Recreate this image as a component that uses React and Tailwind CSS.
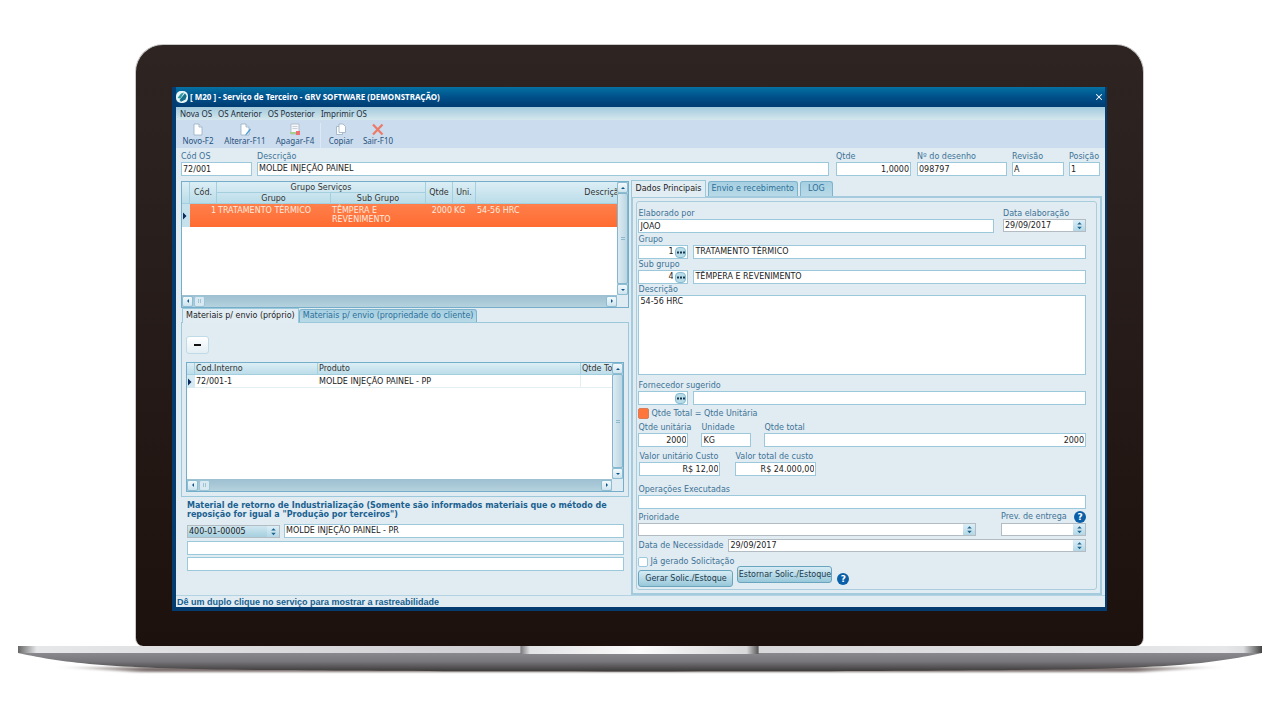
import { X } from 'lucide-react';
import clsx from 'clsx';

const inputClass =
  'block w-full min-w-0 h-[14px] px-px border border-[#9cc8dc] bg-white text-[8px] leading-[12px] text-[#222] outline-none';

const Label = ({ htmlFor, children }) => (
  <label htmlFor={htmlFor} className="block h-[11px] leading-[11px] text-[#3d7396] whitespace-nowrap">
    {children}
  </label>
);

// One-line description box
const LineBox = ({ id, ariaLabel, value }) => (
  <textarea
    id={id}
    aria-label={ariaLabel}
    rows={1}
    defaultValue={value}
    className={clsx(inputClass, 'resize-none overflow-hidden whitespace-nowrap')}
  />
);

const Field = ({ id, label, value = '', right, line, className }) => (
  <div className={className}>
    <Label htmlFor={id}>{label}</Label>
    {line ? (
      <LineBox id={id} value={value} />
    ) : (
      <input id={id} defaultValue={value} className={clsx(inputClass, right && 'text-right')} />
    )}
  </div>
);

const Arrow = ({ dir }) => {
  const points = {
    up: '1,4 3,2 5,4',
    down: '1,2 3,4 5,2',
    left: '4,1 2,3 4,5',
    right: '2,1 4,3 2,5',
  };
  return (
    <svg viewBox="0 0 6 6" className="w-[6px] h-[6px]">
      <polygon points={points[dir]} fill="#0f5687" />
    </svg>
  );
};

const RowMarker = () => (
  <svg viewBox="0 0 8 8" className="size-[8px]">
    <path d="M1 0.5 4.5 4 1 7.5z" fill="#06285c" />
  </svg>
);

const SpinMark = () => (
  <svg viewBox="0 0 11 11" className="w-[11px] h-[11px]">
    <path d="M3.2 4.6 5.5 2.2 7.8 4.6zM3.2 6.8 5.5 9.2 7.8 6.8z" fill="#1b6490" />
  </svg>
);

// Date box with the small up/down button
const SpinInput = ({ id, value = '' }) => (
  <div className="flex h-[13px] border border-[#b3bcc2] bg-white">
    <input id={id} defaultValue={value} className="flex-1 w-full min-w-0 px-px text-[8px] leading-[11px] text-[#222] outline-none" />
    <button aria-label="Alterar valor" className="w-[12px] shrink-0 flex items-center justify-center bg-linear-to-b from-[#dceef6] to-[#b4d7e6]">
      <SpinMark />
    </button>
  </div>
);

const SpinSelect = ({ id, value = '', filled }) => (
  <div
    className={clsx(
      'relative h-[13px] border border-[#b3bcc2]',
      filled ? 'bg-linear-to-b from-[#cfe7f0] to-[#a5cfdf]' : 'bg-white',
    )}
  >
    <select id={id} aria-label={id} className="block w-full h-[11px] px-px appearance-none bg-transparent text-[8px] leading-[11px] text-[#222] outline-none">
      <option>{value}</option>
    </select>
    <span className="absolute right-0 top-0 w-[12px] h-[11px] flex justify-center pointer-events-none bg-linear-to-b from-[#dceef6] to-[#b4d7e6]">
      <SpinMark />
    </span>
  </div>
);

const LookupField = ({ id, label, code = '', name = '' }) => (
  <div>
    <Label htmlFor={id}>{label}</Label>
    <div className="flex gap-[5px]">
      <div className="w-[50px] shrink-0 h-[14px] flex items-center border border-[#9cc8dc] bg-white">
        <input id={id} defaultValue={code} className="flex-1 w-full min-w-0 h-[12px] text-[8px] leading-[12px] text-right text-[#222] pr-[2px] outline-none" />
        <button aria-label="Pesquisar" className="w-[11px] h-[11px] mr-px shrink-0 rounded-[4px] border border-[#86b9d0] bg-[#b9dce9] flex items-center justify-center">
          <svg viewBox="0 0 8 3" className="w-[8px] h-[3px]">
            <path d="M0 .5h2v2H0zM3 .5h2v2H3zM6 .5h2v2H6z" fill="#16374d" />
          </svg>
        </button>
      </div>
      <LineBox ariaLabel={label} value={name} />
    </div>
  </div>
);

const Help = () => (
  <button
    aria-label="Ajuda"
    className="size-[12px] shrink-0 rounded-full bg-[#0a60a8] text-white font-bold text-[9px] leading-[12px] text-center"
  >
    ?
  </button>
);

const ScrollButton = ({ dir }) => (
  <button
    aria-label={dir}
    className="size-[11px] shrink-0 flex items-center justify-center rounded-[2px] border border-[#8dbdd2] bg-linear-to-b from-[#f2f9fc] to-[#cfe4ee]"
  >
    <Arrow dir={dir} />
  </button>
);

// Grid frame: content plus vertical and horizontal scrollbars
const GridFrame = ({ className, children }) => (
  <div className={clsx('flex flex-col border border-[#74aecb] bg-white', className)}>
    <div className="flex flex-1 min-h-0">
      <div className="flex-1 min-w-0 overflow-hidden">{children}</div>
      <div className="w-[11px] flex flex-col bg-[#b2cfdd]">
        <ScrollButton dir="up" />
        <div className="flex-1 flex flex-col items-center justify-center gap-px rounded-[2px] border border-[#84b7ce] bg-linear-to-r from-[#dcebf2] to-[#bcd6e2]">
          <span className="w-[4px] h-px bg-[#8cb8cc]" />
          <span className="w-[4px] h-px bg-[#8cb8cc]" />
        </div>
        <ScrollButton dir="down" />
      </div>
    </div>
    <div className="flex h-[12px] items-center bg-[#dfebf2]">
      <div className="flex flex-1 h-full items-center bg-linear-to-b from-[#9dbfd0] to-[#b5d1de]">
        <ScrollButton dir="left" />
        <div className="size-[11px] ml-px flex items-center justify-center gap-px rounded-[2px] border border-[#9cc6d8] bg-[#d9e9f1]">
          <span className="w-px h-[4px] bg-[#a2c3d3]" />
          <span className="w-px h-[4px] bg-[#a2c3d3]" />
        </div>
        <span className="flex-1" />
        <ScrollButton dir="right" />
      </div>
      <span className="w-[11px]" />
    </div>
  </div>
);

const Tab = ({ active, tall, children }) => (
  <button
    role="tab"
    aria-selected={!!active}
    className={clsx(
      'px-[3px] border border-b-0 whitespace-nowrap',
      active
        ? '-mb-px border-[#9cc8dc] bg-[#e2ecf3] text-[#222]'
        : 'rounded-t-[3px] border-[#7db4cd] bg-linear-to-b from-[#a6cfe1] to-[#b9dae7] text-[#2c7099]',
      active && (tall ? 'h-[17px]' : 'h-[15px]'),
      !active && (tall ? 'h-[15px]' : 'h-[13px]'),
    )}
  >
    {children}
  </button>
);

const Sheet = ({ children }) => (
  <>
    <path d="M3 1h5l3 3v8H3z" fill="#fff" stroke="#98adc3" strokeWidth="0.8" />
    <path d="M8 1v3h3" fill="#dfe9f4" stroke="#98adc3" strokeWidth="0.8" />
    {children}
  </>
);

const tools = [
  { label: 'Novo-F2', width: 'w-[44px]', icon: <Sheet /> },
  {
    label: 'Alterar-F11',
    width: 'w-[50px]',
    icon: (
      <Sheet>
        <path d="M12 5.5 8 10.5l-1 2 2-1 4-5z" fill="#4f9fd8" />
      </Sheet>
    ),
  },
  {
    label: 'Apagar-F4',
    width: 'w-[50px]',
    icon: (
      <>
        <path d="M3 1h8v10H3z" fill="#f7f8fa" stroke="#a9b4c4" strokeWidth="0.8" />
        <path d="M4.5 3.5h5M4.5 5.5h5" stroke="#b9c4d2" strokeWidth="0.8" />
        <path d="M2 9h6v2H2z" fill="#a6cf8d" />
        <path d="M8 8h4v4H8z" fill="#ee6f74" />
      </>
    ),
  },
  {
    label: 'Copiar',
    width: 'w-[41px]',
    icon: (
      <>
        <path d="M2.5 3.5h6v8h-6z" fill="#fff" stroke="#98adc3" strokeWidth="0.8" />
        <path d="M5 1h4l2.5 2.5V9.5H5z" fill="#fff" stroke="#98adc3" strokeWidth="0.8" />
      </>
    ),
  },
  {
    label: 'Sair-F10',
    width: 'w-[34px]',
    icon: <path d="M2 1.5 11.5 11.5M11.5 1.5 2 11.5" stroke="#ec7a68" strokeWidth="2.2" />,
  },
];

const Toolbar = () => (
  <div className="flex h-[28px] pt-[3px] bg-[#cbdcee] font-['Noto_Sans',sans-serif] text-[#27527c]">
    {tools.map(({ label, width, icon }) => (
      <button
        key={label}
        className={clsx(
          width,
          'flex flex-col items-center whitespace-nowrap',
          label === 'Copiar' && 'border-l border-[#dde8f4]',
        )}
      >
        <svg viewBox="0 0 14 13" fill="none" className="w-[14px] h-[13px]">
          {icon}
        </svg>
        <span className="leading-[10px]">{label}</span>
      </button>
    ))}
  </div>
);

const thClass = 'p-0 font-normal border-r border-b border-[#a3cfdf]';

const ServicesGrid = () => (
  <GridFrame className="h-[127px]">
    <table className="table-fixed w-[551px] border-separate border-spacing-0 leading-[9px]">
      <colgroup>
        <col className="w-[8px]" />
        <col className="w-[27px]" />
        <col className="w-[114px]" />
        <col className="w-[95px]" />
        <col className="w-[27px]" />
        <col className="w-[23px]" />
        <col className="w-[257px]" />
      </colgroup>
      <thead className="bg-linear-to-b from-[#dceef5] to-[#b9dce8] text-[#333]">
        <tr className="h-[11px]">
          <th rowSpan={2} className={thClass} />
          <th rowSpan={2} className={thClass}>Cód.</th>
          <th colSpan={2} className={thClass}>Grupo Serviços</th>
          <th rowSpan={2} className={thClass}>Qtde</th>
          <th rowSpan={2} className={thClass}>Uni.</th>
          <th rowSpan={2} className={thClass}>Descrição</th>
        </tr>
        <tr className="h-[11px]">
          <th className={thClass}>Grupo</th>
          <th className={thClass}>Sub Grupo</th>
        </tr>
      </thead>
      <tbody>
        <tr className="h-[23px] align-top bg-linear-to-b from-[#ff7f4b] to-[#ff6b30] text-[#ffeadf]">
          <td className="p-0 align-middle bg-[#c4e1ec]">
            <RowMarker />
          </td>
          <td className="px-px pt-[2px] pb-0 text-right">1</td>
          <td className="px-px pt-[2px] pb-0">TRATAMENTO TÉRMICO</td>
          <td className="px-px pt-[2px] pb-0">TÊMPERA E REVENIMENTO</td>
          <td className="px-px pt-[2px] pb-0 text-right">2000</td>
          <td className="px-px pt-[2px] pb-0">KG</td>
          <td className="px-px pt-[2px] pb-0">54-56 HRC</td>
        </tr>
      </tbody>
    </table>
  </GridFrame>
);

const MaterialsGrid = () => (
  <GridFrame className="h-[130px]">
    <table className="table-fixed w-[460px] border-separate border-spacing-0 leading-[11px]">
      <colgroup>
        <col className="w-[8px]" />
        <col className="w-[123px]" />
        <col className="w-[263px]" />
        <col className="w-[66px]" />
      </colgroup>
      <thead className="bg-linear-to-b from-[#dceef5] to-[#b9dce8] text-[#333] text-left">
        <tr className="h-[12px]">
          <th className={thClass} />
          <th className={clsx(thClass, 'pl-px')}>Cod.Interno</th>
          <th className={clsx(thClass, 'pl-px')}>Produto</th>
          <th className={clsx(thClass, 'pl-px')}>Qtde Total</th>
        </tr>
      </thead>
      <tbody>
        <tr className="h-[13px] text-[#222]">
          <td className="p-0 bg-[#d4e9f1]">
            <RowMarker />
          </td>
          <td className="py-0 px-px border-b border-[#e4eff4]">72/001-1</td>
          <td className="py-0 px-px border-b border-r border-[#e4eff4]">MOLDE INJEÇÃO PAINEL - PP</td>
          <td className="py-0 px-px border-b border-[#e4eff4]" />
        </tr>
      </tbody>
    </table>
  </GridFrame>
);

const LeftColumn = () => (
  <div className="min-w-0 pt-px">
    <ServicesGrid />
    <div role="tablist" className="flex items-end pl-px">
      <Tab active>Materiais p/ envio (próprio)</Tab>
      <Tab>Materiais p/ envio (propriedade do cliente)</Tab>
    </div>
    <div className="border border-[#9cc8dc] px-[4px] pt-[13px] pb-[4px]">
      <button
        aria-label="Remover"
        className="w-[23px] h-[18px] mb-[8px] flex items-center justify-center rounded-[3px] border border-[#c0dbe7] bg-linear-to-b from-white to-[#e3eef3]"
      >
        <span className="w-[7px] h-[2px] bg-[#111]" />
      </button>
      <MaterialsGrid />
    </div>
    <div className="pl-[6px] pr-[5px] pt-[4px]">
      <p className="font-bold leading-[9px] text-[#1a6190]">
        Material de retorno de Industrialização (Somente são informados materiais que o método de reposição for igual a
        "Produção por terceiros")
      </p>
      <div className="flex gap-[4px] pt-[5px]">
        <div className="w-[93px] shrink-0 pt-px">
          <SpinSelect id="Material" value="400-01-00005" filled />
        </div>
        <LineBox ariaLabel="Material de retorno" value="MOLDE INJEÇÃO PAINEL - PR" />
      </div>
      <div className="flex flex-col gap-[2px] pt-[3px]">
        <input aria-label="Material 2" className={inputClass} />
        <input aria-label="Material 3" className={inputClass} />
      </div>
    </div>
  </div>
);

const actionClass =
  'w-[95px] h-[17px] rounded-[3px] border border-[#6aa5bf] bg-linear-to-b from-[#d7ecf4] to-[#98c8da] text-[#1c3a4d] whitespace-nowrap';

const MainDataForm = () => (
  <div className="border border-[#a9cddd] rounded-[3px] pl-px pr-[10px] pt-[6px] pb-[2px]">
    <div className="flex gap-[9px]">
      <Field id="elaborado" label="Elaborado por" value="JOAO" className="flex-1" />
      <div className="w-[83px]">
        <Label htmlFor="dataElab">Data elaboração</Label>
        <SpinInput id="dataElab" value="29/09/2017" />
      </div>
    </div>
    <div className="pt-px">
      <LookupField id="grupo" label="Grupo" code="1" name="TRATAMENTO TÉRMICO" />
      <LookupField id="subgrupo" label="Sub grupo" code="4" name="TÊMPERA E REVENIMENTO" />
    </div>
    <Label htmlFor="descServico">Descrição</Label>
    <textarea
      id="descServico"
      defaultValue="54-56 HRC"
      className="block w-full h-[80px] px-px border border-[#9cc8dc] bg-white text-[#222] leading-[11px] resize-none outline-none"
    />
    <div className="pt-[5px]">
      <LookupField id="fornecedor" label="Fornecedor sugerido" />
    </div>
    <label className="flex items-center gap-[2px] h-[17px] text-[#3d7396]">
      <input
        type="checkbox"
        defaultChecked
        className="appearance-none size-[11px] rounded-[2px] border border-[#9cc8dc] bg-white checked:bg-[#ff753b] checked:border-[#d97c58]"
      />
      Qtde Total = Qtde Unitária
    </label>
    <div className="flex">
      <Field id="qtdeUnit" label="Qtde unitária" value="2000" right className="w-[50px] mr-[13px]" />
      <Field id="unidade" label="Unidade" value="KG" className="w-[50px] mr-[13px]" />
      <Field id="qtdeTotal" label="Qtde total" value="2000" right className="flex-1" />
    </div>
    <div className="flex gap-[15px] pt-[4px] pl-px">
      <Field id="valorUnit" label="Valor unitário Custo" value="R$ 12,00" right className="w-[81px]" />
      <Field id="valorTotal" label="Valor total de custo" value="R$ 24.000,00" right className="w-[81px]" />
    </div>
    <Field id="operacoes" label="Operações Executadas" className="pt-[8px]" />
    <div className="flex gap-[25px] pt-[2px]">
      <div className="flex-1 pt-px">
        <Label htmlFor="prioridade">Prioridade</Label>
        <SpinSelect id="prioridade" />
      </div>
      <div className="w-[85px]">
        <div className="flex justify-between">
          <Label htmlFor="prev">Prev. de entrega</Label>
          <Help />
        </div>
        <SpinInput id="prev" />
      </div>
    </div>
    <div className="flex items-center gap-[5px] pt-[3px]">
      <Label htmlFor="necessidade">Data de Necessidade</Label>
      <div className="flex-1">
        <SpinInput id="necessidade" value="29/09/2017" />
      </div>
    </div>
    <label className="flex items-center gap-[2px] pt-[4px] h-[16px] text-[#3d7396]">
      <input type="checkbox" className="appearance-none size-[10px] rounded-[2px] border border-[#9cc8dc] bg-white" />
      Já gerado Solicitação
    </label>
    <div className="flex items-end gap-[4px] -mt-[2px]">
      <button className={actionClass}>Gerar Solic./Estoque</button>
      <button className={clsx(actionClass, 'mb-[4px]')}>Estornar Solic./Estoque</button>
      <div className="pb-[2px] pl-px">
        <Help />
      </div>
    </div>
  </div>
);

const RightColumn = () => (
  <div className="min-w-0">
    <div role="tablist" className="flex items-end gap-[2px]">
      <Tab active tall>Dados Principais</Tab>
      <Tab tall>Envio e recebimento</Tab>
      <Tab tall>
        <span className="px-[4px]">LOG</span>
      </Tab>
    </div>
    <div className="border-2 border-[#a4cbdd] p-[3px]">
      <MainDataForm />
    </div>
  </div>
);

const AppWindow = () => (
  <div className="border-l-4 border-r-2 border-b-4 border-[#043c70] bg-[#e1ebf2] font-['DejaVu_Sans',Verdana,sans-serif] text-[8px] leading-[10px]">
    <header className="flex items-center h-[20px] pr-px bg-linear-to-b from-[#0672a3] via-[#00508a] to-[#003c72] text-white">
      <svg viewBox="0 0 12 12" className="size-[12px]">
        <rect width="12" height="12" rx="5" fill="#e9f6f7" />
        <path d="M1.5 7 5 2.500 8 1.500 4.500 7.500z" fill="#2d9aa5" />
        <path d="M9 2.200 10.700 5 9.500 8.500 5 10.700 3.500 9z" fill="#17718a" />
      </svg>
      <h1 className="flex-1 pl-[2px] font-['Noto_Sans',sans-serif] font-bold">
        [ M20 ] - Serviço de Terceiro - GRV SOFTWARE (DEMONSTRAÇÃO)
      </h1>
      <button aria-label="Fechar">
        <X size={10} strokeWidth={2.5} />
      </button>
    </header>
    <nav className="flex items-center gap-[6px] h-[13px] pl-[4px] bg-linear-to-b from-[#a2cadd] to-[#d5e7ed] font-['Noto_Sans',sans-serif] text-[#1c2a38]">
      <button>Nova OS</button>
      <button>OS Anterior</button>
      <button>OS Posterior</button>
      <button>Imprimir OS</button>
    </nav>
    <Toolbar />
    <div className="flex pt-[3px] pb-[4px] px-[5px]">
      <Field id="codOs" label="Cód OS" value="72/001" className="w-[71px] mr-[5px]" />
      <Field id="descricao" label="Descrição" value="MOLDE INJEÇÃO PAINEL" line className="flex-1 mr-[7px]" />
      <Field id="qtde" label="Qtde" value="1,0000" right className="w-[75px] mr-[6px]" />
      <Field id="desenho" label="Nº do desenho" value="098797" className="w-[90px] mr-[5px]" />
      <Field id="revisao" label="Revisão" value="A" className="w-[52px] mr-[5px]" />
      <Field id="posicao" label="Posição" value="1" className="w-[31px]" />
    </div>
    <main className="grid grid-cols-[minmax(0,448fr)_minmax(0,470fr)] gap-[2px] pl-[5px] pr-[3px]">
      <LeftColumn />
      <RightColumn />
    </main>
    <footer className="h-[12px] pl-px border-t border-[#b4d3e2] font-['Liberation_Sans',Arial,sans-serif] font-bold text-[9px] leading-[12px] text-[#17608f]">
      Dê um duplo clique no serviço para mostrar a rastreabilidade
    </footer>
  </div>
);

const LaptopBase = () => (
  <svg viewBox="0 0 1243 30" preserveAspectRatio="none" className="block w-full h-[30px]">
    <defs>
      <linearGradient id="under" x1="0" y1="0" x2="0" y2="1">
        <stop offset="0" stopColor="#8a898d" />
        <stop offset="0.45" stopColor="#78777b" />
        <stop offset="1" stopColor="#3b3838" />
      </linearGradient>
      <linearGradient id="strip" x1="0" y1="0" x2="1" y2="0">
        <stop offset="0" stopColor="#666" />
        <stop offset="0.015" stopColor="#e6e7e9" />
        <stop offset="0.4" stopColor="#cfced2" />
        <stop offset="0.6" stopColor="#d8d8db" />
        <stop offset="0.97" stopColor="#e6e7e9" />
        <stop offset="0.985" stopColor="#dddee0" />
        <stop offset="1" stopColor="#444" />
      </linearGradient>
      <linearGradient id="notch" x1="0" y1="0" x2="1" y2="0">
        <stop offset="0" stopColor="#77767a" />
        <stop offset="0.04" stopColor="#e2e3e5" />
        <stop offset="0.5" stopColor="#fbfbfb" />
        <stop offset="0.95" stopColor="#d8d8da" />
        <stop offset="1" stopColor="#555" />
      </linearGradient>
      <linearGradient id="shadow" x1="0" y1="0" x2="1" y2="0">
        <stop offset="0" stopColor="#7d7270" stopOpacity="0" />
        <stop offset="0.08" stopColor="#7d7270" />
        <stop offset="0.92" stopColor="#7d7270" />
        <stop offset="1" stopColor="#7d7270" stopOpacity="0" />
      </linearGradient>
      <filter id="soft" x="-5%" y="-50%" width="110%" height="200%">
        <feGaussianBlur stdDeviation="4 1" />
      </filter>
    </defs>
    <path d="M36 21H1207L1120 26H120z" fill="url(#shadow)" filter="url(#soft)" />
    <path d="M0 7C50 18 100 23 250 24C450 26 793 26 993 24C1143 23 1193 18 1243 7z" fill="url(#under)" />
    <rect width="1243" height="7" fill="url(#strip)" />
    <rect x="502" width="238" height="8" fill="url(#notch)" />
  </svg>
);

export default function App() {
  return (
    <div className="min-h-screen bg-white pt-[44px]">
      <div className="ml-[135px] mr-[136px] px-[36px] pt-[42px] pb-[35px] rounded-t-[28px] rounded-b-[8px] border border-b-0 border-[#c9c9c9] bg-linear-to-b from-[#2e2523] to-[#1d110d]">
        <AppWindow />
      </div>
      <div className="mx-[18px]">
        <LaptopBase />
      </div>
    </div>
  );
}
